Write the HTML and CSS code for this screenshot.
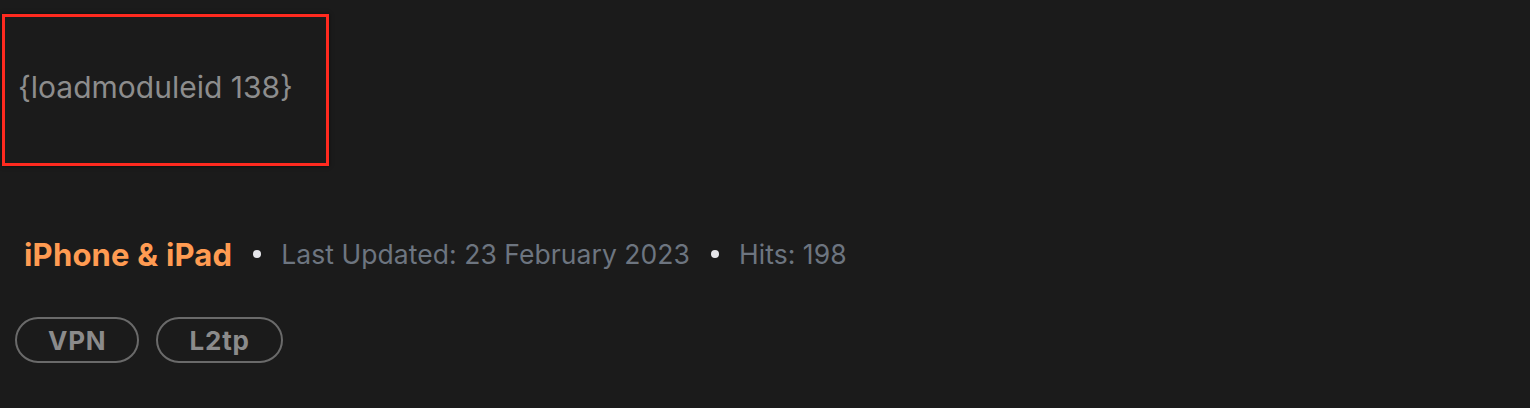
FILE: index.html
```html
<!DOCTYPE html>
<html>
<head>
<meta charset="utf-8">
<link rel="stylesheet" href="styles.css">
</head>
<body>
<div class="page">
  <div class="module-box">
    <p class="module-text">{loadmoduleid 138}</p>
  </div>
  <div class="meta">
    <a class="category">iPhone &amp; iPad</a>
    <span class="dot"></span>
    <span class="info">Last Updated: 23 February 2023</span>
    <span class="dot"></span>
    <span class="info">Hits: 198</span>
  </div>
  <div class="tags">
    <span class="tag">VPN</span>
    <span class="tag">L2tp</span>
  </div>
</div>
</body>
</html>
```
FILE: styles.css
```css
html, body {
  margin: 0;
  padding: 0;
  background: #1b1b1b;
}
body {
  font-family: Inter, "Noto Sans", sans-serif;
  width: 1530px;
  height: 408px;
  overflow: hidden;
}
.page {
  padding: 14px 0 0 2px;
}
.module-box {
  width: 321px;
  height: 146px;
  border: 3px solid #ff2a1f;
  box-shadow: 0 0 4px rgba(0,0,0,0.6);
  display: flex;
  align-items: center;
}
.module-text {
  margin: 0 0 6px 13px;
  color: #8d8d8d;
  font-size: 30px;
  letter-spacing: 0;
  font-weight: 400;
}
.meta {
  display: flex;
  align-items: center;
  margin: 68px 0 0 22px;
  height: 40px;
}
.category {
  color: #ff9b52;
  font-weight: 700;
  font-size: 31px;
  letter-spacing: 0.2px;
}
.dot {
  width: 8px;
  height: 8px;
  border-radius: 50%;
  background: #e6e6ea;
  margin: 0 20px 0 21px;
}
.info {
  color: #6d7580;
  font-size: 26.5px;
  letter-spacing: 0.05px;
}
.tags {
  display: flex;
  gap: 17px;
  margin: 43px 0 0 13px;
}
.tag {
  display: flex;
  align-items: center;
  justify-content: center;
  height: 42px;
  padding: 0 31px;
  border: 2px solid #6a6a6a;
  border-radius: 23px;
  color: #8b8b8b;
  font-weight: 700;
  font-size: 26px;
  letter-spacing: 0.8px;
}
```
